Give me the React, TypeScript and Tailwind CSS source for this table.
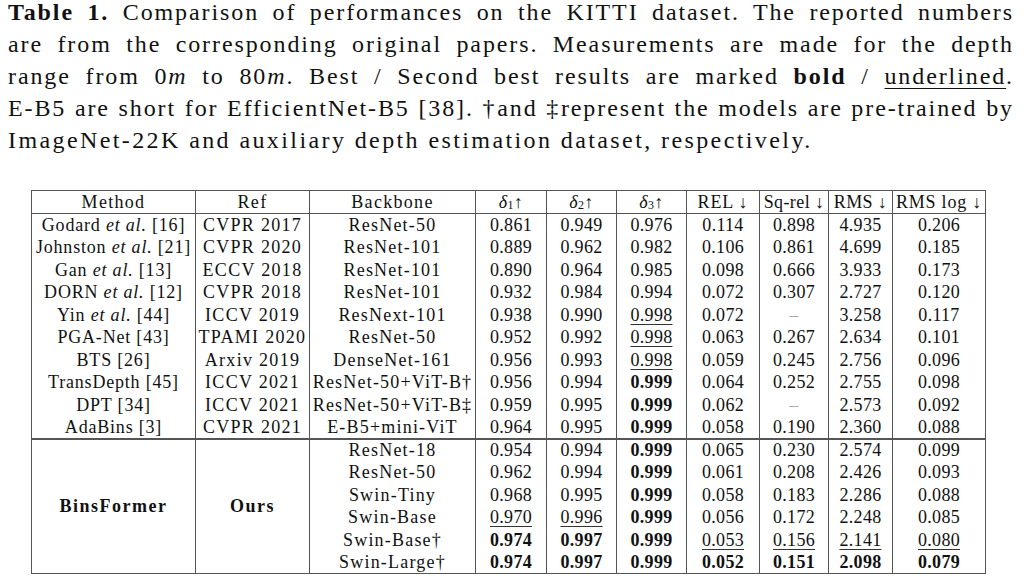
import React from 'react';

type Cell = { v: string; b?: boolean; u?: boolean; dash?: boolean };

interface Row {
  method?: React.ReactNode;
  ref?: string;
  backbone: string;
  cells: Cell[];
}

const c = (v: string, f: string = ''): Cell => ({ v, b: f.includes('b'), u: f.includes('u'), dash: v === '-' });

const etal = (name: string, cite: string) => (
  <>
    {name} <i>et al.</i> [{cite}]
  </>
);

const prior: Row[] = [
  { method: etal('Godard', '16'), ref: 'CVPR 2017', backbone: 'ResNet-50', cells: [c('0.861'), c('0.949'), c('0.976'), c('0.114'), c('0.898'), c('4.935'), c('0.206')] },
  { method: etal('Johnston', '21'), ref: 'CVPR 2020', backbone: 'ResNet-101', cells: [c('0.889'), c('0.962'), c('0.982'), c('0.106'), c('0.861'), c('4.699'), c('0.185')] },
  { method: etal('Gan', '13'), ref: 'ECCV 2018', backbone: 'ResNet-101', cells: [c('0.890'), c('0.964'), c('0.985'), c('0.098'), c('0.666'), c('3.933'), c('0.173')] },
  { method: etal('DORN', '12'), ref: 'CVPR 2018', backbone: 'ResNet-101', cells: [c('0.932'), c('0.984'), c('0.994'), c('0.072'), c('0.307'), c('2.727'), c('0.120')] },
  { method: etal('Yin', '44'), ref: 'ICCV 2019', backbone: 'ResNext-101', cells: [c('0.938'), c('0.990'), c('0.998', 'u'), c('0.072'), c('-'), c('3.258'), c('0.117')] },
  { method: 'PGA-Net [43]', ref: 'TPAMI 2020', backbone: 'ResNet-50', cells: [c('0.952'), c('0.992'), c('0.998', 'u'), c('0.063'), c('0.267'), c('2.634'), c('0.101')] },
  { method: 'BTS [26]', ref: 'Arxiv 2019', backbone: 'DenseNet-161', cells: [c('0.956'), c('0.993'), c('0.998', 'u'), c('0.059'), c('0.245'), c('2.756'), c('0.096')] },
  { method: 'TransDepth [45]', ref: 'ICCV 2021', backbone: 'ResNet-50+ViT-B†', cells: [c('0.956'), c('0.994'), c('0.999', 'b'), c('0.064'), c('0.252'), c('2.755'), c('0.098')] },
  { method: 'DPT [34]', ref: 'ICCV 2021', backbone: 'ResNet-50+ViT-B‡', cells: [c('0.959'), c('0.995'), c('0.999', 'b'), c('0.062'), c('-'), c('2.573'), c('0.092')] },
  { method: 'AdaBins [3]', ref: 'CVPR 2021', backbone: 'E-B5+mini-ViT', cells: [c('0.964'), c('0.995'), c('0.999', 'b'), c('0.058'), c('0.190'), c('2.360'), c('0.088')] },
];

const ours: Row[] = [
  { backbone: 'ResNet-18', cells: [c('0.954'), c('0.994'), c('0.999', 'b'), c('0.065'), c('0.230'), c('2.574'), c('0.099')] },
  { backbone: 'ResNet-50', cells: [c('0.962'), c('0.994'), c('0.999', 'b'), c('0.061'), c('0.208'), c('2.426'), c('0.093')] },
  { backbone: 'Swin-Tiny', cells: [c('0.968'), c('0.995'), c('0.999', 'b'), c('0.058'), c('0.183'), c('2.286'), c('0.088')] },
  { backbone: 'Swin-Base', cells: [c('0.970', 'u'), c('0.996', 'u'), c('0.999', 'b'), c('0.056'), c('0.172'), c('2.248'), c('0.085')] },
  { backbone: 'Swin-Base†', cells: [c('0.974', 'b'), c('0.997', 'b'), c('0.999', 'b'), c('0.053', 'u'), c('0.156', 'u'), c('2.141', 'u'), c('0.080', 'u')] },
  { backbone: 'Swin-Large†', cells: [c('0.974', 'b'), c('0.997', 'b'), c('0.999', 'b'), c('0.052', 'b'), c('0.151', 'b'), c('2.098', 'b'), c('0.079', 'b')] },
];

const widths = [164, 114, 166, 71, 70, 70, 73, 69, 64, 93];

const td = 'border-x border-[#555] p-0 text-center align-middle whitespace-nowrap';

function Value({ cell }: { cell: Cell }) {
  if (cell.dash) return <span className="text-[#aaa]">–</span>;
  return (
    <span
      className={`${cell.b ? 'font-bold' : ''} ${
        cell.u ? 'underline decoration-1 underline-offset-[3px] decoration-[#333]' : ''
      }`}
    >
      {cell.v}
    </span>
  );
}

function Delta({ n }: { n: string }) {
  return (
    <>
      <i>δ</i>
      <sub className="text-[12px] -bottom-[0.1em]">{n}</sub>↑
    </>
  );
}

export default function App() {
  const line = 'text-justify [text-align-last:justify] tracking-[1.9px]';
  const th = `${td} font-normal`;
  return (
    <div className="w-[1024px] h-[585px] bg-white text-[#111] [font-family:'Liberation_Serif',serif] overflow-hidden">
      {/* Caption */}
      <div className="px-[8px] mr-[2px] -mt-[4px] text-[24px] leading-[32px]">
        <div className={line}>
          <b>Table 1.</b> Comparison of performances on the KITTI dataset. The reported numbers
        </div>
        <div className={line}>are from the corresponding original papers. Measurements are made for the depth</div>
        <div className={line}>
          range from 0<i>m</i> to 80<i>m</i>. Best / Second best results are marked <b>bold</b> /{' '}
          <span className="underline decoration-1 underline-offset-[4px]">underlined</span>.
        </div>
        <div className={line}>
          E-B5 are short for EfficientNet-B5 [38]. †and ‡represent the models are pre-trained by
        </div>
        <div className="tracking-[2.4px]">ImageNet-22K and auxiliary depth estimation dataset, respectively.</div>
      </div>

      {/* Table */}
      <div className="mt-[34px] ml-[31px]">
        <table className="table-fixed border-collapse border border-[#555] text-[18px] tracking-[0.3px] leading-none w-[954px]">
          <colgroup>
            {widths.map((w, i) => (
              <col key={i} style={{ width: w }} />
            ))}
          </colgroup>
          <thead>
            <tr className="h-[23px] border-b border-[#555]">
              <th className={`${th} tracking-[1.3px]`}>Method</th>
              <th className={`${th} tracking-[1.3px]`}>Ref</th>
              <th className={`${th} tracking-[1.3px]`}>Backbone</th>
              <th className={th}>
                <Delta n="1" />
              </th>
              <th className={th}>
                <Delta n="2" />
              </th>
              <th className={th}>
                <Delta n="3" />
              </th>
              <th className={`${th} tracking-[0.8px]`}>REL ↓</th>
              <th className={`${th} tracking-[0.4px]`}>Sq-rel ↓</th>
              <th className={`${th} tracking-[0.4px]`}>RMS ↓</th>
              <th className={`${th} tracking-[0.8px]`}>RMS log ↓</th>
            </tr>
          </thead>
          <tbody>
            {prior.map((r, i) => (
              <tr key={i} className="h-[22.5px]">
                <td className={`${td} tracking-[0.8px]`}>{r.method}</td>
                <td className={`${td} tracking-[1.3px]`}>{r.ref}</td>
                <td className={`${td} tracking-[1.2px]`}>{r.backbone}</td>
                {r.cells.map((cell, j) => (
                  <td key={j} className={td}>
                    <Value cell={cell} />
                  </td>
                ))}
              </tr>
            ))}
            {ours.map((r, i) => (
              <tr key={`o${i}`} className={`h-[22.5px] ${i === 0 ? 'border-t-2 border-[#555]' : ''}`}>
                {i === 0 && (
                  <>
                    <td rowSpan={6} className={`${td} font-bold tracking-[1.5px]`}>
                      BinsFormer
                    </td>
                    <td rowSpan={6} className={`${td} font-bold tracking-[1.5px]`}>
                      Ours
                    </td>
                  </>
                )}
                <td className={`${td} tracking-[1.2px]`}>{r.backbone}</td>
                {r.cells.map((cell, j) => (
                  <td key={j} className={td}>
                    <Value cell={cell} />
                  </td>
                ))}
              </tr>
            ))}
          </tbody>
        </table>
      </div>
    </div>
  );
}
